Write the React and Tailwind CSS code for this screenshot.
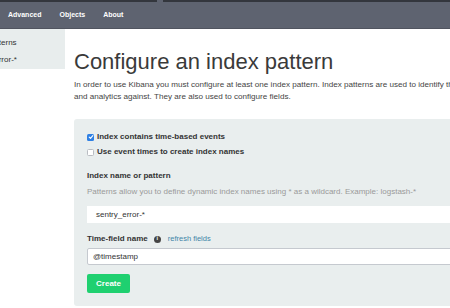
import React from 'react';

const IndexPatternPage = () => {
  const navItems = ['Advanced', 'Objects', 'About'];

  return (
    <div className="w-[450px] h-[308px] overflow-hidden bg-white flex flex-col font-['Liberation_Sans',Arial,sans-serif]">
      {/* Top strip */}
      <div className="h-[2px] bg-[#33363d] flex">
        <div className="w-[157px]" />
        <div className="w-[6px] bg-[#5e6370]" />
      </div>

      {/* Nav */}
      <div className="h-[27px] bg-[#5e6370] border-b border-[#50545f] flex items-center gap-[18px] pl-[8px]">
        {navItems.map((item) => (
          <span key={item} className="text-[7px] font-bold text-white">
            {item}
          </span>
        ))}
      </div>

      <div className="flex flex-1">
        {/* Sidebar */}
        <div className="w-[65px] h-[40px] bg-[#e8eded] overflow-hidden flex flex-col pt-[5px] text-[8px] text-[#333]">
          <div className="h-[19px] flex items-center whitespace-nowrap ml-[-35px]">Index Patterns</div>
          <div className="h-[19px] flex items-center whitespace-nowrap ml-[-32px]">sentry_error-*</div>
        </div>

        {/* Main */}
        <div className="flex-1 pl-[9px] pt-[20px] min-w-0">
          <h1 className="text-[22px] leading-[25px] text-[#3a3a3a] whitespace-nowrap">Configure an index pattern</h1>
          <p className="mt-[5px] text-[8.1px] leading-[12px] text-[#444] whitespace-nowrap">
            In order to use Kibana you must configure at least one index pattern. Index patterns are used to identify the Elasticsearch index to run search
            <br />
            and analytics against. They are also used to configure fields.
          </p>

          {/* Form panel */}
          <div className="mt-[16px] w-[400px] h-[187px] bg-[#e9eeee] rounded-[3px] pl-[13px] pt-[12px]">
            <div className="h-[12px] flex items-center gap-[3px]">
              <div className="w-[7px] h-[7px] rounded-[1.5px] bg-[#2f80e4] flex items-center justify-center">
                <svg viewBox="0 0 10 10" className="w-[6px] h-[6px]">
                  <path d="M2 5.2 L4.2 7.3 L8 2.8" fill="none" stroke="white" strokeWidth="1.8" strokeLinecap="round" strokeLinejoin="round" />
                </svg>
              </div>
              <span className="text-[8px] font-bold text-[#333]">Index contains time-based events</span>
            </div>
            <div className="mt-[3px] h-[12px] flex items-center gap-[3px]">
              <div className="w-[7px] h-[7px] rounded-[1.5px] bg-white border border-[#b9bcc2]" />
              <span className="text-[8px] font-bold text-[#333]">Use event times to create index names</span>
            </div>

            <div className="mt-[12px] h-[12px] flex items-center text-[8px] font-bold text-[#333]">Index name or pattern</div>
            <div className="mt-[4px] h-[12px] flex items-center text-[8px] text-[#9a9a9a] whitespace-nowrap">
              Patterns allow you to define dynamic index names using * as a wildcard. Example: logstash-*
            </div>
            <div className="mt-[8px] h-[17px] bg-white flex items-center pl-[9px] text-[8px] text-[#333]">sentry_error-*</div>

            <div className="mt-[10px] h-[12px] flex items-center">
              <span className="text-[8px] font-bold text-[#333]">Time-field name</span>
              <span className="ml-[6px] w-[7px] h-[7px] rounded-full bg-[#444] text-white text-[5.5px] font-bold flex items-center justify-center leading-none">i</span>
              <span className="ml-[7px] text-[7.5px] text-[#3f86a8]">refresh fields</span>
            </div>
            <div className="mt-[3px] h-[17px] bg-white border border-[#c5c9cf] rounded-[2px] flex items-center pl-[5px] text-[8px] text-[#333]">@timestamp</div>

            <button className="mt-[9px] w-[43px] h-[19px] bg-[#1fd070] rounded-[2px] text-white text-[8px] font-bold flex items-center justify-center">
              Create
            </button>
          </div>
        </div>
      </div>
    </div>
  );
};

export default IndexPatternPage;
